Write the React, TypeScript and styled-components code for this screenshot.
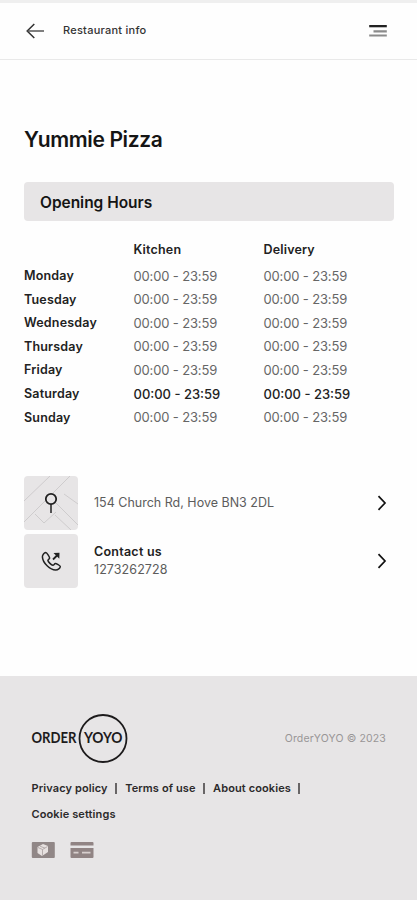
import React from "react";
import styled, { createGlobalStyle } from "styled-components";

const GlobalStyle = createGlobalStyle`
  * { box-sizing: border-box; }
  body { margin: 0; background: #fefefe; font-family: Inter, "Liberation Sans", sans-serif; color: #151515; }
  h1, h2, p { margin: 0; }
`;

const Page = styled.div`
  display: flex;
  flex-direction: column;
  width: 417px;
  height: 900px;
  overflow: hidden;
  background: #fefefe;
`;

const TopBar = styled.header`
  display: flex;
  align-items: center;
  height: 60px;
  padding: 0 30px 1px 26px;
  border-top: 3px solid #efefef;
  border-bottom: 1px solid #e9e9e9;
`;

const BarTitle = styled.span`
  flex: 1;
  margin-left: 18px;
  padding-bottom: 1px;
  font-size: 11px;
  line-height: 16px;
  font-weight: 500;
  letter-spacing: 0.25px;
  color: #333;
`;

const Icon = styled.svg`
  display: block;
  flex: none;
`;

const Main = styled.main`
  display: flex;
  flex-direction: column;
  height: 616px;
  padding: 66px 23px 0 24px;
`;

const Name = styled.h1`
  font-size: 21px;
  line-height: 28px;
  font-weight: 600;
  letter-spacing: -0.37px;
`;

const SectionTitle = styled.h2`
  height: 39px;
  margin-top: 28px;
  padding-left: 16px;
  border-radius: 4px;
  background: #e7e5e6;
  font-size: 15.5px;
  line-height: 41px;
  font-weight: 600;
  letter-spacing: -0.03px;
`;

const Hours = styled.div`
  display: grid;
  grid-template-columns: 109.5px 130px 1fr;
  grid-template-rows: 30px;
  grid-auto-rows: 23.55px;
  align-items: center;
  margin-top: 13px;
  font-size: 13px;
`;

const Label = styled.span`
  font-size: 12.5px;
  font-weight: 600;
  letter-spacing: 0.18px;
  color: #222;
`;

const Time = styled.span<{ $strong?: boolean }>`
  font-weight: ${(p) => (p.$strong ? 500 : 400)};
  letter-spacing: ${(p) => (p.$strong ? "0" : "-0.15px")};
  color: ${(p) => (p.$strong ? "#222" : "#666")};
`;

const Links = styled.div`
  display: grid;
  row-gap: 4px;
  margin-top: 47px;
`;

const LinkRow = styled.div`
  display: flex;
  align-items: center;
  height: 54px;
  padding-right: 7px;
`;

const Thumb = styled.div`
  width: 54px;
  height: 54px;
  border-radius: 4px;
  background: #e7e5e6;
  overflow: hidden;
`;

const LinkText = styled.div`
  flex: 1;
  margin-left: 16px;
  font-size: 12.5px;
  line-height: 17.5px;
  color: #5c5c5c;
`;

const LinkHeading = styled.p`
  font-weight: 600;
  letter-spacing: 0.25px;
  color: #222;
`;

const PhoneNumber = styled.p`
  letter-spacing: 0.08px;
`;

const Footer = styled.footer`
  flex: 1;
  padding: 38px 31px 0;
  background: #e7e5e6;
`;

const FooterTop = styled.div`
  display: flex;
  align-items: center;
  justify-content: space-between;
  height: 49px;
`;

const Copyright = styled.span`
  padding-bottom: 1px;
  font-size: 10.5px;
  letter-spacing: 0.14px;
  color: #999697;
`;

const FooterLinks = styled.nav`
  display: flex;
  flex-wrap: wrap;
  width: 320px;
  margin-top: 12px;
  padding-left: 0.5px;
  font-size: 11px;
  line-height: 26px;
  font-weight: 600;
  letter-spacing: 0.11px;
  color: #2c2a2b;
`;

const FooterLink = styled.span<{ $divided?: boolean }>`
  display: flex;
  align-items: center;
  white-space: nowrap;
  &::after {
    content: "";
    display: ${(p) => (p.$divided ? "block" : "none")};
    width: 2px;
    height: 11px;
    margin: 0 8px 0 7.5px;
    background: #686566;
  }
`;

const Payments = styled.div`
  display: flex;
  gap: 15px;
  margin-top: 15px;
`;

const days = ["Monday", "Tuesday", "Wednesday", "Thursday", "Friday", "Saturday", "Sunday"];

const Chevron = () => (
  <Icon width="10" height="16" viewBox="0 0 10 16" fill="none" stroke="#111" strokeWidth="1.7">
    <path d="M1.5 1.2 8 8l-6.5 6.8" />
  </Icon>
);

export default function App() {
  return (
    <>
      <GlobalStyle />
      <Page>
        <TopBar>
          <Icon width="19" height="16" viewBox="0 0 19 16" fill="none" stroke="#303030" strokeWidth="1.5">
            <path d="M8.3 1 1.2 8l7.1 7" />
            <path d="M1.5 8H18" stroke="#555" />
          </Icon>
          <BarTitle>Restaurant info</BarTitle>
          <Icon width="18" height="14" viewBox="0 0 18 14">
            <path d="M.2 1h17.6v2.3H.2z" fill="#222" />
            <path d="M4.5 6.2h13.3v2.2H4.5zM.2 10.4h17.6v2.2H.2z" fill="#8b8b8b" />
          </Icon>
        </TopBar>
        <Main>
          <Name>Yummie Pizza</Name>
          <SectionTitle>Opening Hours</SectionTitle>
          <Hours>
            <span />
            <Label>Kitchen</Label>
            <Label>Delivery</Label>
            {days.map((day) => (
              <React.Fragment key={day}>
                <Label>{day}</Label>
                <Time $strong={day === "Saturday"}>00:00 - 23:59</Time>
                <Time $strong={day === "Saturday"}>00:00 - 23:59</Time>
              </React.Fragment>
            ))}
          </Hours>
          <Links>
            <LinkRow>
              <Thumb>
                <Icon width="54" height="54" viewBox="0 0 54 54" fill="none">
                  <path d="M0 25 26 0M0 46 46 0M11 38l9 9 12-11M29 24l25 25M31 39l16 15M40 18l14 10" stroke="#cecccd" />
                  <circle cx="27" cy="23" r="5.2" fill="#e7e5e6" stroke="#222" strokeWidth="1.8" />
                  <path d="M27 28v9" stroke="#222" strokeWidth="1.5" />
                </Icon>
              </Thumb>
              <LinkText>154 Church Rd, Hove BN3 2DL</LinkText>
              <Chevron />
            </LinkRow>
            <LinkRow>
              <Thumb>
                <Icon width="54" height="54" viewBox="0 0 54 54" fill="none" stroke="#222" strokeWidth="1.5">
                  <path d="M21.8 18.5c-1.5.2-3.5 2.3-3.4 4.4.3 6 7.8 13.4 13.4 13.2 2.2 0 4.3-1.9 4.5-3.5 0-.8-4.1-3.2-5-3.1-.8.1-1.6 1.9-2.4 1.8-1.6-.2-4.7-3.3-5-4.8-.1-.8 1.6-1.6 1.7-2.4.1-1-2.9-5.7-3.8-5.6Z" strokeLinejoin="round" />
                  <path d="m29 25.500 5-5" strokeWidth="1.8" />
                  <path d="m29.500 19 6-.2-.2 6Z" fill="#222" stroke="none" />
                </Icon>
              </Thumb>
              <LinkText>
                <LinkHeading>Contact us</LinkHeading>
                <PhoneNumber>1273262728</PhoneNumber>
              </LinkText>
              <Chevron />
            </LinkRow>
          </Links>
        </Main>
        <Footer>
          <FooterTop>
            <Icon width="98" height="50" viewBox="0 0 98 50">
              <circle cx="72" cy="24.500" r="23.500" fill="none" stroke="#1d1b1c" strokeWidth="1.8" />
              <g fontFamily="Lato, sans-serif" fontSize="14.500" fontWeight="700" fill="#1d1b1c">
                <text x="0.500" y="29.300" textLength="45" lengthAdjust="spacingAndGlyphs">ORDER</text>
                <text x="53" y="29.300" textLength="38.500" lengthAdjust="spacingAndGlyphs">YOYO</text>
              </g>
            </Icon>
            <Copyright>OrderYOYO © 2023</Copyright>
          </FooterTop>
          <FooterLinks>
            <FooterLink $divided>Privacy policy</FooterLink>
            <FooterLink $divided>Terms of use</FooterLink>
            <FooterLink $divided>About cookies</FooterLink>
            <FooterLink>Cookie settings</FooterLink>
          </FooterLinks>
          <Payments>
            <Icon width="24" height="16" viewBox="0 0 24 16">
              <rect x=".8" width="23" height="16" rx="1" fill="#918787" />
              <path d="m6.500 5 5.500-3 5 2v6l-6 4-4.500-3Z" fill="#e7e1e0" />
              <path d="m7 5.500 4.500 2 5-3M11.500 7.500v6M9 4.200l5 2" fill="none" stroke="#aaa0a0" strokeWidth=".8" />
            </Icon>
            <Icon width="24" height="16" viewBox="0 0 24 16">
              <path d="M1.500 0h21q1 0 1 1v2.500H.5V1q0-1 1-1ZM.5 6h23v9q0 1-1 1h-21q-1 0-1-1Z" fill="#918484" />
              <path d="M3.500 10.700h5M12 10.700h8.500" stroke="#d8cfce" strokeWidth="1.800" />
            </Icon>
          </Payments>
        </Footer>
      </Page>
    </>
  );
}
